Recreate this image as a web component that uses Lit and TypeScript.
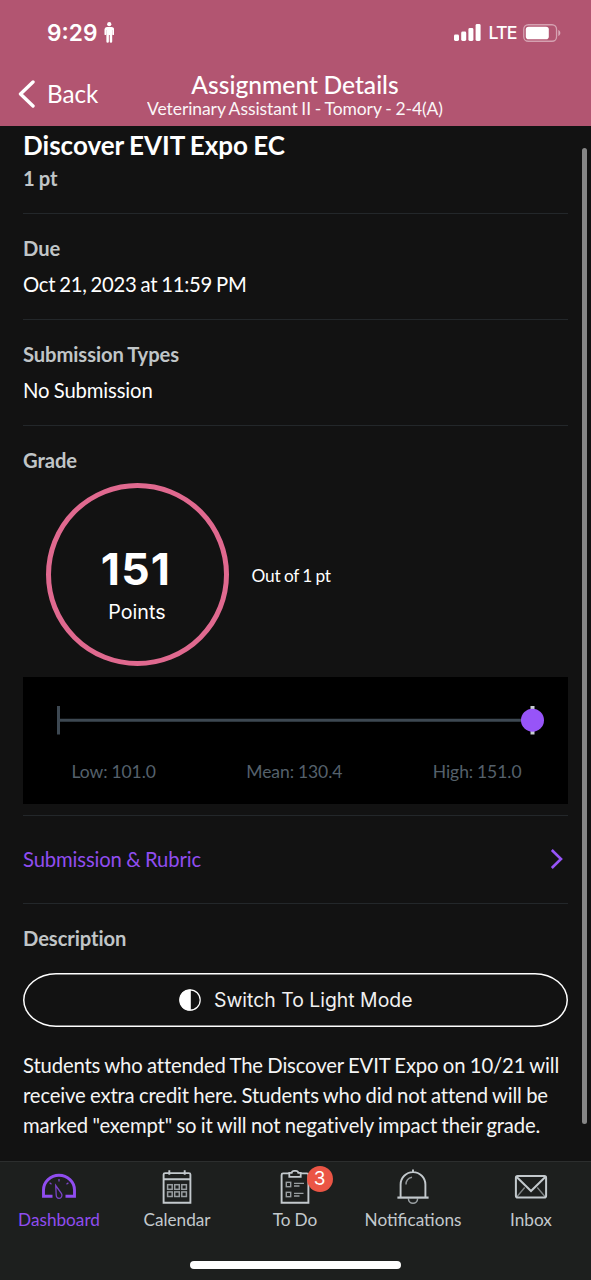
import { LitElement, html, css, svg } from "lit";
import { customElement, property } from "lit/decorators.js";

const icons: Record<string, unknown> = {
  dashboard: svg`
    <path d="M10.500 26.200H1.500V20a15.500 14.700 0 0 1 31 0v6.200H23.500" stroke-width="2.900"/>
    <g stroke-width="1.300" opacity=".8"><path d="M17 9v2.500M7.600 12.800l1.900 1.500M26.400 12.800l-1.900 1.500"/>
    <path d="M13.700 15.500l5.800 8.200c1.200 2-.2 4.600-2.300 4.600s-3-1.600-3-3.500z"/></g>`,
  calendar: svg`
    <path d="M3.600 9.200h26.800M3.600 4.600a1.500 1.500 0 0 1 1.500-1.500h23.800a1.500 1.500 0 0 1 1.500 1.500v28.200H3.600z" stroke-width="1.900"/>
    <path d="M9.300.3v4.500M24.700.3v4.500" stroke-width="1.900"/>
    <g stroke-width="1.500" opacity=".75"><rect x="7.600" y="14.700" width="4.600" height="4.600"/><rect x="14.700" y="14.700" width="4.600" height="4.600"/><rect x="21.800" y="14.700" width="4.600" height="4.600"/>
    <rect x="7.600" y="21.900" width="4.600" height="4.600"/><rect x="14.700" y="21.900" width="4.600" height="4.600"/><rect x="21.800" y="21.900" width="4.600" height="4.600"/></g>`,
  todo: svg`
    <path d="M11 3.400H5.100a1.500 1.500 0 0 0-1.500 1.500v27.900h26.800V4.900a1.500 1.500 0 0 0-1.500-1.500H23" stroke-width="1.900"/>
    <path d="M11.300 2.800h2.400c.3-1.600 1.200-1.900 2.500-1.900h1.600c1.300 0 2.200.3 2.500 1.900h2.400v4H11.300z" stroke-width="1.800"/>
    <g stroke-width="1.400" opacity=".75"><rect x="8.300" y="12.300" width="4.400" height="4.400"/><rect x="8.300" y="22.300" width="4.400" height="4.400"/>
    <path d="M16 13.400h10M16 16h5.500M16 23.400h9.500M16 26h5.500"/></g>`,
  bell: svg`
    <path d="M1.400 27.600H32.600" stroke-width="2.200"/><path d="M4.600 27.500V14.500a12.400 12.400 0 0 1 24.800 0v13M17 2.500V-.5" stroke-width="1.900"/>
    <path d="M10 14.500c0-4 2.200-6.500 6-7.300" stroke-width="1.400" opacity=".7"/><path d="M12.400 28.500a4.600 4.800 0 0 0 9.200 0" stroke-width="1.500" opacity=".75"/>`,
  mail: svg`
    <rect x="1.900" y="6.100" width="30.200" height="21.400" rx="1.800" stroke-width="2"/>
    <path d="M2.700 7L17 21L31.300 7" stroke-width="2"/><path d="M2.700 27l8-9.500M31.300 27l-8-9.500" stroke-width="1.300" opacity=".6"/>`,
};

@customElement("tab-item")
class TabItem extends LitElement {
  @property() icon = "";
  @property() label = "";
  @property() badge = "";
  @property({ type: Boolean, reflect: true }) active = false;
  static styles = css`
    :host { flex: 1; display: flex; flex-direction: column; align-items: center; padding-top: 8px; color: #c3c9cd; }
    :host([active]) { color: #904df0; }
    .icon { position: relative; width: 34px; height: 36px; }
    svg { display: block; fill: none; stroke: currentColor; overflow: visible; }
    .label { font-size: 17.200px; line-height: 22px; margin-top: 2.500px; white-space: nowrap; word-spacing: -.5px; letter-spacing: 0; }
    .badge { position: absolute; left: 28.500px; top: -4.500px; width: 26px; height: 26px; border-radius: 50%; background: #eb5545; color: #fff; font: 400 19px/26px Inter, sans-serif; text-align: center; }
  `;
  render() {
    return html`<div class="icon"><svg width="34" height="36" viewBox="0 0 34 36">${icons[this.icon]}</svg>
      ${this.badge ? html`<span class="badge">${this.badge}</span>` : ""}</div>
      <div class="label">${this.label}</div>`;
  }
}

@customElement("app-root")
class AppRoot extends LitElement {
  static styles = css`
    :host { display: flex; flex-direction: column; position: relative; width: 591px; height: 1280px; overflow: hidden; background: #121212; color: #fff; font-family: Lato, sans-serif; font-size: 20.300px; line-height: 26px; word-spacing: -.6px; letter-spacing: -.15px; }
    * { box-sizing: border-box; }
    svg { display: block; }
    header { height: 125.500px; background: #b25571; flex: none; letter-spacing: 0; }
    .status { height: 65px; display: flex; align-items: center; padding-left: 47px; padding-right: 30px; font-family: Inter, sans-serif; }
    .time { font-size: 22.700px; font-weight: 600; }
    .person { margin-left: 6.500px; }
    .signals { margin-left: auto; display: flex; align-items: center; gap: 7px; }
    .lte { font-size: 17.800px; font-weight: 500; letter-spacing: -.9px; margin-right: -.5px; }
    .nav { display: grid; grid-template-columns: 147px 296px 1fr; height: 60px; }
    .back { display: flex; align-items: center; padding-left: 18px; gap: 12px; font-size: 24.200px; height: 58px; }
    .heading { display: flex; flex-direction: column; align-items: center; white-space: nowrap; padding-top: 6px; }
    .name { font-size: 24.600px; font-weight: 500; line-height: 27px; }
    .course { font-size: 17.500px; line-height: 21px; opacity: .95; word-spacing: -.6px; letter-spacing: -.08px; }
    main { padding: 0 23px; flex: 1; display: flex; flex-direction: column; min-height: 0; }
    .title { font-size: 26px; line-height: 32px; font-weight: 700; margin-top: 3px; word-spacing: -1.100px; letter-spacing: 0; }
    .label { color: #c0c5c7; font-weight: 700; font-size: 20.200px; font-variant-ligatures: none; word-spacing: -.8px; letter-spacing: -.08px; }
    .intro { height: 87px; flex: none; }
    .intro .label { margin-top: 4px; line-height: 26px; }
    section { border-top: 1.500px solid #23272a; flex: none; }
    .field { height: 106px; padding-top: 21px; display: flex; flex-direction: column; gap: 10px; }
    .date { word-spacing: -1px; letter-spacing: -.25px; }
    .grade { height: 390.600px; padding-top: 21px; }
    .score { display: flex; align-items: center; padding-left: 22.500px; gap: 23px; margin-top: 10.500px; }
    .ring { width: 183px; height: 183px; border: 5px solid #e0698f; border-radius: 50%; display: flex; flex-direction: column; align-items: center; font-family: Inter, sans-serif; letter-spacing: 0; }
    .num { font-size: 44.500px; line-height: 52px; font-weight: 700; margin: 55px 2px 0 0; letter-spacing: 1.200px; }
    .pts { font-size: 19.700px; line-height: 26px; margin-top: 4px; }
    .out { font-size: 17.300px; padding-top: 3px; word-spacing: -.9px; letter-spacing: -.17px; }
    .stats { height: 126.500px; background: #000; margin-top: 11px; padding: 28px 23px 0 34px; }
    .nums { display: flex; justify-content: space-between; padding: 0 23.500px 0 14.500px; margin-top: 25px; font-size: 17.500px; line-height: 24px; color: #55616c; word-spacing: -.6px; letter-spacing: -.05px; }
    .rubric { height: 88px; display: flex; align-items: center; justify-content: space-between; color: #904df0; padding: 0 5px 2px 0; }
    .desc { padding-top: 21px; }
    .switch { height: 54px; box-shadow: inset 0 0 0 1.500px #fff; border-radius: 33px / 27px; margin-top: 21.500px; display: flex; align-items: center; justify-content: center; gap: 13.500px; font-family: Inter, sans-serif; font-size: 19.400px; color: #f0f0f0; word-spacing: 0; letter-spacing: 0; }
    .text { margin: 23.500px -10px 0 0; line-height: 30px; color: #f5f5f5; white-space: nowrap; }
    footer { height: 119px; flex: none; background: #1d1f1e; border-top: 1px solid #2c2e2e; display: flex; flex-direction: column; align-items: center; }
    .tabs { display: flex; align-self: stretch; height: 99px; padding-right: 1px; }
    .home { width: 211px; height: 8px; border-radius: 4px; background: #fff; }
    .scroll { position: absolute; left: 582px; top: 148px; width: 5px; height: 976px; border-radius: 3px; background: #868686; }
  `;
  render() {
    return html`
      <header>
        <div class="status">
          <span class="time">9:29</span>
          <svg class="person" width="10.500" height="21" viewBox="0 0 11 22" fill="#fff"><circle cx="5.500" cy="2.300" r="2.200"/><path d="M3 5.200h5a2.600 2.600 0 0 1 2.600 2.600v5a.9.900 0 0 1-1.800 0V8.500h-.2V20.500a1.100 1.100 0 0 1-2.600 0v-7h-.9v7a1.100 1.100 0 0 1-2.600 0V8.500h-.2v4.300a.9.900 0 0 1-1.800 0v-5A2.600 2.600 0 0 1 3 5.200z"/></svg>
          <div class="signals">
            <svg width="27" height="17" viewBox="0 0 27 17" fill="#fff"><rect y="10.500" width="5" height="6.500" rx="1.400"/><rect x="7.200" y="7.500" width="5" height="9.500" rx="1.400"/><rect x="14.400" y="4" width="5" height="13" rx="1.400"/><rect x="21.600" width="5" height="17" rx="1.400"/></svg>
            <span class="lte">LTE</span>
            <svg width="38" height="18" viewBox="0 0 38 18"><rect x=".75" y=".75" width="32.800" height="16.500" rx="4.500" fill="none" stroke="#fff" stroke-opacity=".45" stroke-width="1.300"/><rect x="2.800" y="2.800" width="23" height="12.400" rx="2.800" fill="#fff"/><path d="M35.300 6v6c1.300-.5 2-1.700 2-3s-.7-2.500-2-3z" fill="#fff" opacity=".5"/></svg>
          </div>
        </div>
        <div class="nav">
          <div class="back"><svg width="17" height="28" viewBox="0 0 17 28" fill="none" stroke="#fff" stroke-width="3.400" stroke-linecap="round" stroke-linejoin="round"><path d="M15 2L2.500 14L15 26"/></svg>Back</div>
          <div class="heading"><div class="name">Assignment Details</div><div class="course">Veterinary Assistant II - Tomory - 2-4(A)</div></div>
        </div>
      </header>
      <main>
        <div class="intro"><div class="title">Discover EVIT Expo EC</div><div class="label">1 pt</div></div>
        <section class="field"><div class="label">Due</div><div class="date">Oct 21, 2023 at 11:59 PM</div></section>
        <section class="field"><div class="label">Submission Types</div><div>No Submission</div></section>
        <section class="grade">
          <div class="label">Grade</div>
          <div class="score"><div class="ring"><div class="num">151</div><div class="pts">Points</div></div><div class="out">Out of 1 pt</div></div>
          <div class="stats">
            <svg width="488" height="30" viewBox="0 0 488 30"><path d="M1.500 1v28.500M1.500 15.200h474" stroke="#3d4852" stroke-width="3"/><path d="M475.500 1v28.500" stroke="#c7cdd1" stroke-width="4"/><circle cx="475.500" cy="15.200" r="11.500" fill="#9754f8"/></svg>
            <div class="nums"><span>Low: 101.0</span><span>Mean: 130.4</span><span>High: 151.0</span></div>
          </div>
        </section>
        <section class="rubric"><span>Submission &amp; Rubric</span><svg width="13" height="20" viewBox="0 0 13 20" fill="none" stroke="#9754f8" stroke-width="2.600"><path d="M1.800 1L11 10L1.800 19"/></svg></section>
        <section class="desc">
          <div class="label">Description</div>
          <div class="switch"><svg width="22" height="22" viewBox="0 0 22 22"><circle cx="11" cy="11" r="10.200" fill="none" stroke="#fff" stroke-width="1.200"/><path d="M11.800.5V21.500H11A10.500 10.500 0 0 1 11 .5z" fill="#fff"/></svg><span>Switch To Light Mode</span></div>
          <div class="text">Students who attended The Discover EVIT Expo on 10/21 will<br>receive extra credit here. Students who did not attend will be<br>marked "exempt" so it will not negatively impact their grade.</div>
        </section>
      </main>
      <footer>
        <div class="tabs">
          <tab-item icon="dashboard" label="Dashboard" active></tab-item>
          <tab-item icon="calendar" label="Calendar"></tab-item>
          <tab-item icon="todo" label="To Do" badge="3"></tab-item>
          <tab-item icon="bell" label="Notifications"></tab-item>
          <tab-item icon="mail" label="Inbox"></tab-item>
        </div>
        <div class="home"></div>
      </footer>
      <div class="scroll"></div>
    `;
  }
}
